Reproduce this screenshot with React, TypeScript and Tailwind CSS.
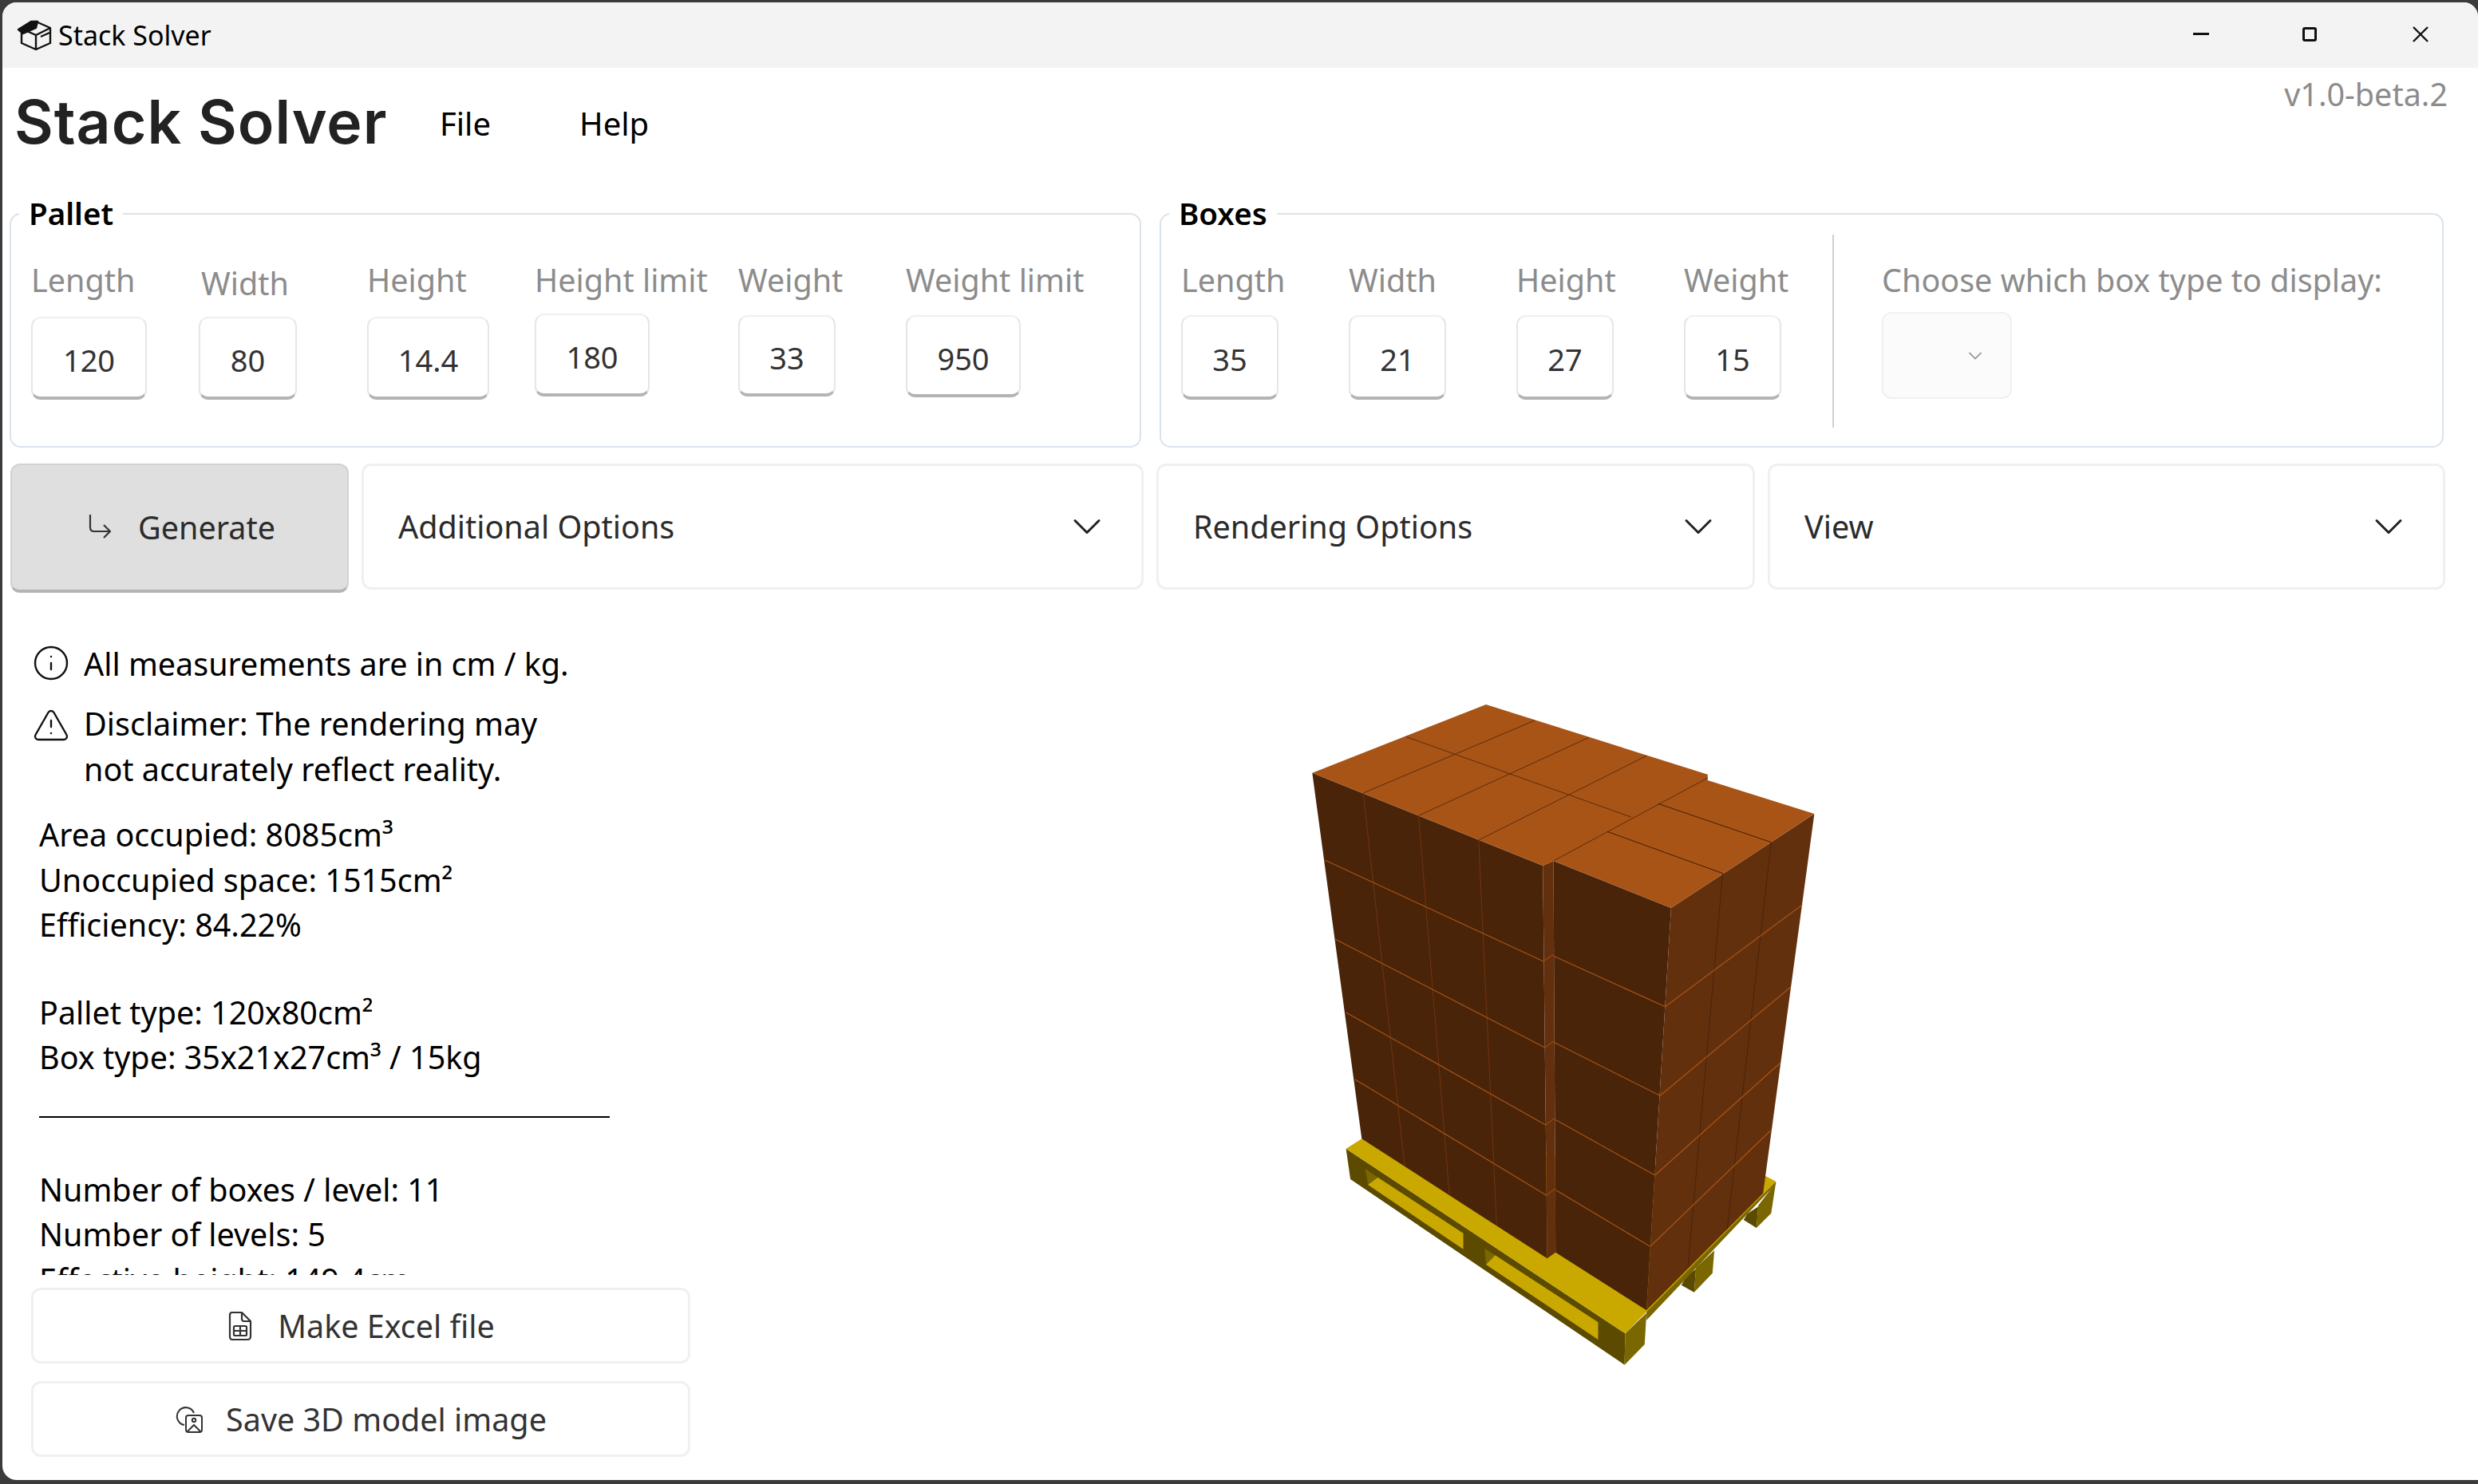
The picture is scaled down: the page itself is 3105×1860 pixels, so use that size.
import React from 'react';
import { ChevronDown, Info, TriangleAlert } from 'lucide-react';

const uiFont = "font-['Noto_Sans',sans-serif]";

// zoom-space helpers for the pallet drawing, 720x870 canvas
const a = (x: number, y: number) => `${(x * 0.4592).toFixed(1)},${(y / 3).toFixed(1)}`;
const b = (x: number, y: number) => `${(x * 0.4592).toFixed(1)},${(420 + y / 3).toFixed(1)}`;

const Poly = ({ pts, fill }: { pts: string[]; fill: string }) => <polygon points={pts.join(' ')} fill={fill} />;
const Ln = ({ from, to, color, w = 1 }: { from: string; to: string; color: string; w?: number }) => {
  const [x1, y1] = from.split(',');
  const [x2, y2] = to.split(',');
  return <line x1={x1} y1={y1} x2={x2} y2={y2} stroke={color} strokeWidth={w} />;
};

const PalletView = () => {
  const orange = '#a85417';
  const dark = '#4a2409';
  const mid = '#63300e';
  const yellow = '#c9a900';
  const olive = '#7a6700';
  const deep = '#5c4a00';
  const seam = '#a85417';
  return (
    <svg width="720" height="870" viewBox="0 0 720 870">
      {/* pallet */}
      <Poly pts={[b(145, 467), b(907, 1162), b(905, 1280), b(157, 582)]} fill={deep} />
      <Poly pts={[b(198, 543), b(232, 575), b(205, 603)]} fill={olive} />
      <Poly pts={[b(232, 575), b(465, 785), b(465, 845), b(205, 603)]} fill={yellow} />
      <Poly pts={[b(523, 842), b(552, 868), b(527, 903)]} fill={olive} />
      <Poly pts={[b(552, 868), b(833, 1120), b(833, 1185), b(527, 903)]} fill={yellow} />
      <Poly pts={[b(907, 1162), b(965, 1085), b(960, 1203), b(905, 1280)]} fill={olive} />
      <Poly pts={[b(1270, 685), b(1265, 765), b(1230, 735), b(1240, 712)]} fill={deep} />
      <Poly pts={[b(1318, 595), b(1305, 710), b(1265, 765), b(1270, 680)]} fill={olive} />
      <Poly pts={[b(1100, 920), b(1095, 1007), b(1060, 980), b(1075, 945)]} fill={deep} />
      <Poly pts={[b(1150, 850), b(1145, 935), b(1095, 1007), b(1100, 915)]} fill={olive} />
      <Poly pts={[b(965, 1075), b(1318, 590), b(1318, 600), b(965, 1112)]} fill={olive} />
      <Poly pts={[b(188, 430), b(1290, 570), b(1318, 590), b(907, 1162), b(145, 467)]} fill={yellow} />

      {/* box stack faces */}
      <Poly pts={[a(53, 314), a(682, 663), b(694, 880), b(188, 430)]} fill={dark} />
      <Poly pts={[a(682, 663), a(711, 645), b(717, 857), b(694, 880)]} fill={mid} />
      <Poly pts={[a(711, 645), a(1032, 822), b(965, 1075), b(717, 857)]} fill={dark} />
      <Poly pts={[a(1032, 822), a(1423, 468), b(1283, 635), b(965, 1075)]} fill={mid} />
      <Poly
        pts={[a(527, 57), a(1132, 320), a(1132, 342), a(1423, 468), a(1032, 822), a(711, 645), a(682, 663), a(53, 314)]}
        fill={orange}
      />

      {/* top seams */}
      <Ln from={a(308, 178)} to={a(923, 480)} color="#5a2c0c" />
      <Ln from={a(660, 117)} to={a(192, 390)} color="#5a2c0c" />
      <Ln from={a(808, 181)} to={a(343, 475)} color="#5a2c0c" />
      <Ln from={a(965, 250)} to={a(507, 567)} color="#5a2c0c" />
      <Ln from={a(1132, 333)} to={a(711, 645)} color="#5a2c0c" />
      <Ln from={a(997, 430)} to={a(1305, 575)} color="#3f1f08" />
      <Ln from={a(858, 535)} to={a(1173, 692)} color="#3f1f08" />

      {/* vertical seams */}
      <Ln from={a(192, 390)} to={b(305, 530)} color="#6e3510" />
      <Ln from={a(343, 475)} to={b(427, 640)} color="#6e3510" />
      <Ln from={a(507, 567)} to={b(556, 755)} color="#6e3510" />
      <Ln from={a(1173, 692)} to={b(1078, 915)} color="#47230a" />
      <Ln from={a(1305, 575)} to={b(1185, 770)} color="#47230a" />

      {/* level seams */}
      <Ln from={a(87, 642)} to={a(683, 1022)} color={seam} w={1.2} />
      <Ln from={a(116, 940)} to={b(688, 87)} color={seam} w={1.2} />
      <Ln from={a(145, 1215)} to={b(690, 378)} color={seam} w={1.2} />
      <Ln from={b(170, 207)} to={b(692, 643)} color={seam} w={1.2} />
      <Ln from={a(683, 1022)} to={a(711, 997)} color={seam} />
      <Ln from={b(688, 87)} to={b(713, 62)} color={seam} />
      <Ln from={b(690, 378)} to={b(714, 352)} color={seam} />
      <Ln from={b(692, 643)} to={b(716, 617)} color={seam} />
      <Ln from={a(711, 1003)} to={a(1016, 1193)} color={seam} w={1.2} />
      <Ln from={b(714, 68)} to={b(1002, 268)} color={seam} w={1.2} />
      <Ln from={b(716, 358)} to={b(988, 567)} color={seam} w={1.2} />
      <Ln from={b(718, 623)} to={b(975, 835)} color={seam} w={1.2} />
      <Ln from={a(1016, 1193)} to={a(1390, 810)} color={seam} w={1.2} />
      <Ln from={b(1002, 268)} to={a(1358, 1120)} color={seam} w={1.2} />
      <Ln from={b(988, 567)} to={b(1330, 145)} color={seam} w={1.2} />
      <Ln from={b(975, 835)} to={b(1303, 400)} color={seam} w={1.2} />
    </svg>
  );
};

const BoxLogo = () => (
  <svg width="46" height="40" viewBox="0 0 46 40" fill="none" stroke="#111" strokeWidth="2.4" strokeLinejoin="round">
    <path d="M6 12 L24 3 L42 11 L42 30 L24 38 L6 30 Z" />
    <path d="M6 12 L24 20 L42 11 M24 20 V38" />
    <path d="M2 13 L18 3 L26 3 L24 11 L8 18 Z" fill="#111" />
    <path d="M30 22 L41 17" />
  </svg>
);

const Field = ({
  label,
  value,
  col,
  input,
  labelClass = '',
  inputClass = 'mt-[19px]',
}: {
  label: string;
  value: string;
  col: string;
  input: string;
  labelClass?: string;
  inputClass?: string;
}) => (
  <div className={`${col} shrink-0 flex flex-col items-start pt-[30px]`}>
    <div className={`h-[54px] leading-[54px] text-[39.5px] text-[#8c8c8c] whitespace-nowrap ${labelClass}`}>{label}</div>
    <div
      className={`${input} ${inputClass} flex items-center justify-center rounded-[12px] border-2 border-[#e6e6e6] border-t-[#efefef] border-b-[4px] border-b-[#b4b4b4] bg-white text-[38px] text-[#333] pt-[7px]`}
    >
      {value}
    </div>
  </div>
);

const OptionBar = ({ label, width }: { label: string; width: string }) => (
  <div
    className={`${width} h-[158px] shrink-0 flex items-center justify-between rounded-[12px] border-[3px] border-[#f0f0f0] pl-[43px] pr-[38px] text-[39.5px] text-[#2b2b2b]`}
  >
    <span className="pt-[2px]">{label}</span>
    <ChevronDown size={60} strokeWidth={1.2} color="#222" />
  </div>
);

const App = () => {
  return (
    <div className={`w-[3105px] h-[1860px] bg-[#3b3b3b] pt-[3px] pl-[3px] pb-[5px] overflow-hidden ${uiFont}`}>
      <div className="w-full h-full flex flex-col bg-white rounded-t-[18px] rounded-bl-[18px] overflow-hidden relative">
        {/* title bar */}
        <div className="h-[82px] shrink-0 flex items-center bg-[#f3f3f3] pl-[18px] pr-[61px]">
          <BoxLogo />
          <span className="ml-[6px] text-[34px] text-black">Stack Solver</span>
          <div className="ml-auto -mt-[3px] flex items-center">
            <div className="w-[20px] h-[3px] bg-[#111]" />
            <div className="ml-[117px] w-[18px] h-[18px] rounded-[3px] border-[3px] border-[#111]" />
            <svg className="ml-[119px]" width="22" height="22" viewBox="0 0 22 22" stroke="#111" strokeWidth="2.4">
              <path d="M2 2 L20 20 M20 2 L2 20" />
            </svg>
          </div>
        </div>

        {/* menu row */}
        <div className="h-[115px] shrink-0 flex items-center pl-[15px] relative">
          <span className="w-[533px] mt-[20px] text-[75px] leading-none font-['Inter',sans-serif] font-semibold text-[#222] tracking-[1px]">
            Stack Solver
          </span>
          <span className="w-[175px] mt-[24px] text-[40px] text-black">File</span>
          <span className="mt-[24px] text-[40px] text-black">Help</span>
          <span className="absolute right-[38px] top-[4px] text-[39.5px] text-[#8c8c8c]">v1.0-beta.2</span>
        </div>

        {/* fieldsets */}
        <div className="flex gap-[23px] pl-[9px] mt-[67px] shrink-0">
          <div className="relative w-[1418px] h-[294px] rounded-[14px] border-2 border-[#dbe3ea] pl-[25px] pt-[25px] flex">
            <span className="absolute left-[10px] -top-[32px] h-[60px] leading-[60px] bg-white px-[12px] text-[38.5px] font-semibold text-black">
              Pallet
            </span>
            <Field label="Length" value="120" col="w-[210px]" input="w-[145px] h-[104px]" />
            <Field label="Width" value="80" col="w-[211px]" input="w-[123px] h-[104px]" labelClass="mt-[4px] ml-[3px]" inputClass="mt-[15px]" />
            <Field label="Height" value="14.4" col="w-[210px]" input="w-[153px] h-[104px]" />
            <Field label="Height limit" value="180" col="w-[255px]" input="w-[144px] h-[104px]" inputClass="mt-[15px]" />
            <Field label="Weight" value="33" col="w-[210px]" input="w-[122px] h-[102px]" inputClass="mt-[17px]" />
            <Field label="Weight limit" value="950" col="w-[240px]" input="w-[144px] h-[103px]" inputClass="mt-[17px]" />
          </div>
          <div className="relative w-[1609px] h-[294px] rounded-[14px] border-2 border-[#dbe3ea] pl-[25px] pt-[25px] flex">
            <span className="absolute left-[10px] -top-[32px] h-[60px] leading-[60px] bg-white px-[12px] text-[38.5px] font-semibold text-black">
              Boxes
            </span>
            <Field label="Length" value="35" col="w-[210px]" input="w-[122px] h-[106px]" inputClass="mt-[17px]" />
            <Field label="Width" value="21" col="w-[210px]" input="w-[122px] h-[106px]" inputClass="mt-[17px]" />
            <Field label="Height" value="27" col="w-[210px]" input="w-[122px] h-[106px]" inputClass="mt-[17px]" />
            <Field label="Weight" value="15" col="w-[186px]" input="w-[122px] h-[106px]" inputClass="mt-[17px]" />
            <div className="w-[2px] h-[242px] bg-[#cfcfcf] shrink-0" />
            <div className="ml-[60px] pt-[30px] flex flex-col items-start">
              <div className="h-[54px] leading-[54px] text-[39.5px] text-[#8c8c8c] whitespace-nowrap">
                Choose which box type to display:
              </div>
              <div className="mt-[13px] w-[163px] h-[109px] rounded-[12px] border-2 border-[#f0f0f0] bg-[#fbfbfb] flex items-center justify-end pr-[30px]">
                <ChevronDown size={28} strokeWidth={1.5} color="#8c8c8c" />
              </div>
            </div>
          </div>
        </div>

        {/* options row */}
        <div className="flex pl-[10px] gap-[16px] mt-[20px] shrink-0">
          <div className="w-[424px] h-[162px] shrink-0 flex items-center justify-center gap-[32px] rounded-[12px] bg-[#dfdfdf] border-2 border-[#d2d2d2] border-b-[4px] border-b-[#b4b4b4] text-[39.5px] text-[#2b2b2b] pl-[6px]">
            <svg width="30" height="34" viewBox="0 0 30 34" fill="none" stroke="#333" strokeWidth="2.2" strokeLinejoin="round">
              <path d="M2 1 V17 Q2 22 7 22 H27 M19 14 L27 22 L19 30" />
            </svg>
            <span className="pt-[2px]">Generate</span>
          </div>
          <OptionBar label="Additional Options" width="w-[980px]" />
          <OptionBar label="Rendering Options" width="w-[750px]" />
          <OptionBar label="View" width="w-[849px]" />
        </div>

        {/* bottom area */}
        <div className="flex-1 min-h-0 flex">
          <div className="w-[880px] shrink-0 flex flex-col pl-[38px]">
            <div className="mt-[60px] h-[56px] flex items-center gap-[17px] text-[39.5px] text-black">
              <Info size={48} strokeWidth={1.2} color="#111" className="-ml-[1px]" />
              <span className="pt-[3px]">All measurements are in cm / kg.</span>
            </div>
            <div className="mt-[20px] flex items-start gap-[17px] text-[39.5px] leading-[57px] text-black">
              <TriangleAlert size={48} strokeWidth={1.2} color="#111" className="-ml-[1px] mt-[6px]" />
              <span>
                Disclaimer: The rendering may
                <br />
                not accurately reflect reality.
              </span>
            </div>
            <div className="mt-[25px] h-[580px] overflow-hidden pl-[8px] text-[39.5px] leading-[56.5px] text-black">
              <div>Area occupied: 8085cm³</div>
              <div>Unoccupied space: 1515cm²</div>
              <div>Efficiency: 84.22%</div>
              <div className="mt-[53px]">Pallet type: 120x80cm²</div>
              <div>Box type: 35x21x27cm³ / 15kg</div>
              <div className="mt-[45px] w-[715px] h-[2px] bg-black" />
              <div className="mt-[62px]">Number of boxes / level: 11</div>
              <div>Number of levels: 5</div>
              <div>Effective height: 149.4cm</div>
            </div>
            <div className="mt-[16px] -ml-[2px] w-[826px] h-[95px] flex items-center justify-center gap-[32px] rounded-[12px] border-[3px] border-[#f0f0f0] text-[39.5px] text-[#333] pl-[2px]">
              <svg width="30" height="38" viewBox="0 0 30 38" fill="none" stroke="#333" strokeWidth="2.2" strokeLinejoin="round">
                <path d="M5 2 H17 L28 13 V32 Q28 36 24 36 H5 Q2 36 2 32 V5 Q2 2 5 2 Z" />
                <path d="M17 2 V10 Q17 13 20 13 H28" />
                <rect x="7" y="19" width="16" height="12" rx="1.5" />
                <path d="M7 25 H23 M15 19 V31" />
              </svg>
              <span className="pt-[2px]">Make Excel file</span>
            </div>
            <div className="mt-[22px] -ml-[2px] w-[826px] h-[95px] flex items-center justify-center gap-[28px] rounded-[12px] border-[3px] border-[#f0f0f0] text-[39.5px] text-[#333]">
              <svg width="36" height="34" viewBox="0 0 36 34" fill="none" stroke="#333" strokeWidth="2" strokeLinejoin="round">
                <path d="M12 24 A11 11 0 1 1 24 9" />
                <rect x="14" y="12" width="20" height="21" rx="3" />
                <circle cx="24" cy="18" r="2.2" />
                <path d="M16 32 L24 24 L32 32" />
              </svg>
              <span className="pt-[2px]">Save 3D model image</span>
            </div>
          </div>
          <div className="flex-1 flex items-center justify-center pr-[28px]">
            <PalletView />
          </div>
        </div>
      </div>
    </div>
  );
};

export default App;
